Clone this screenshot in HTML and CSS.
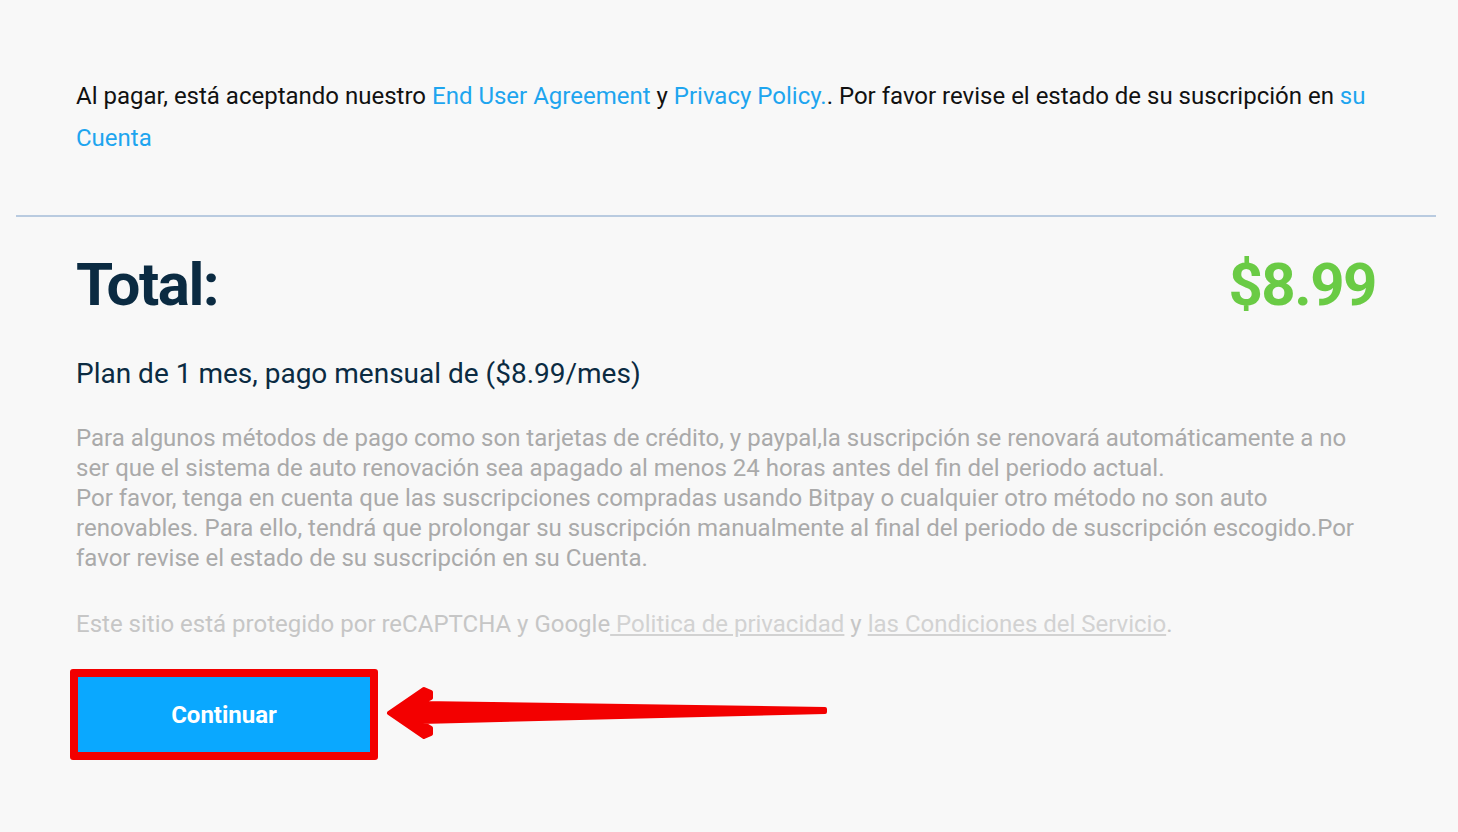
FILE: index.html
```html
<!DOCTYPE html>
<html lang="es">
<head>
    <meta charset="UTF-8">
    <meta name="viewport" content="width=device-width, initial-scale=1.0">
    <title>Resumen de pago</title>
    <link rel="stylesheet" href="styles.css">
</head>
<body>
    <div class="terms">
        Al pagar, está aceptando nuestro <a href="#">End User Agreement</a> y <a href="#">Privacy Policy.</a>. Por favor revise el estado de su suscripción en <a href="#">su Cuenta</a>
    </div>

    <hr class="divider">

    <div class="summary">
        <div class="total-row">
            <span class="total-label">Total:</span>
            <span class="total-price">$8.99</span>
        </div>

        <p class="plan">Plan de 1 mes, pago mensual de ($8.99/mes)</p>

        <p class="notice">
            Para algunos métodos de pago como son tarjetas de crédito, y paypal,la suscripción se renovará automáticamente a no ser que el sistema de auto renovación sea apagado al menos 24 horas antes del fin del periodo actual.<br>
            Por favor, tenga en cuenta que las suscripciones compradas usando Bitpay o cualquier otro método no son auto renovables. Para ello, tendrá que prolongar su suscripción manualmente al final del periodo de suscripción escogido.Por favor revise el estado de su suscripción en su Cuenta.
        </p>

        <p class="recaptcha">
            Este sitio está protegido por reCAPTCHA y Google<a href="#"> Politica de privacidad</a> y <a href="#">las Condiciones del Servicio</a>.
        </p>

        <div class="actions">
            <div class="highlight">
                <button class="continue">Continuar</button>
            </div>
            <svg class="arrow" width="460" height="70" viewBox="380 678 460 70">
                <polygon points="389,713 424,689 431,692 431,698 421,703 825,709 825,712 421,722 431,728 431,734 424,737"
                         fill="#f30000" stroke="#f30000" stroke-width="4" stroke-linejoin="round"/>
            </svg>
        </div>
    </div>
</body>
</html>
```

FILE: styles.css
```css
body {
    margin: 0;
    background: #f8f8f8;
    font-family: Roboto, "Liberation Sans", sans-serif;
}
a {
    color: #1ea5ef;
    text-decoration: none;
}
.terms {
    padding: 75px 82px 0 76px;
    font-size: 24px;
    line-height: 42px;
    color: #111;
}
.divider {
    margin: 56px 22px 0 16px;
    border: none;
    border-top: 2px solid #b9cbe0;
}
.summary {
    padding: 31px 82px 60px 76px;
}
.total-row {
    display: flex;
    justify-content: space-between;
    align-items: center;
    height: 72px;
    font-size: 60px;
    font-weight: 700;
    letter-spacing: -1.5px;
}
.total-label {
    color: #0b2b42;
}
.total-price {
    color: #6acb45;
}
.plan {
    margin: 36px 0 0;
    font-size: 28px;
    line-height: 36px;
    color: #0b2b42;
}
.notice {
    margin: 31px 0 0;
    font-size: 24px;
    line-height: 30px;
    color: #aaa;
}
.recaptcha {
    margin: 36px 0 0;
    font-size: 24px;
    line-height: 30px;
    color: #c6c6c6;
}
.recaptcha a {
    color: #d2d2d2;
    text-decoration: underline;
}
.actions {
    position: relative;
    margin-top: 30px;
}
.highlight {
    display: inline-block;
    margin-left: -6px;
    border: 8px solid #f30000;
    border-radius: 3px;
}
.continue {
    display: block;
    width: 292px;
    height: 75px;
    border: none;
    background: #0aa8ff;
    color: #fff;
    font-family: Roboto, "Liberation Sans", sans-serif;
    font-size: 24px;
    font-weight: 700;
    cursor: pointer;
}
.arrow {
    position: absolute;
    left: 304px;
    top: 9px;
}
```
